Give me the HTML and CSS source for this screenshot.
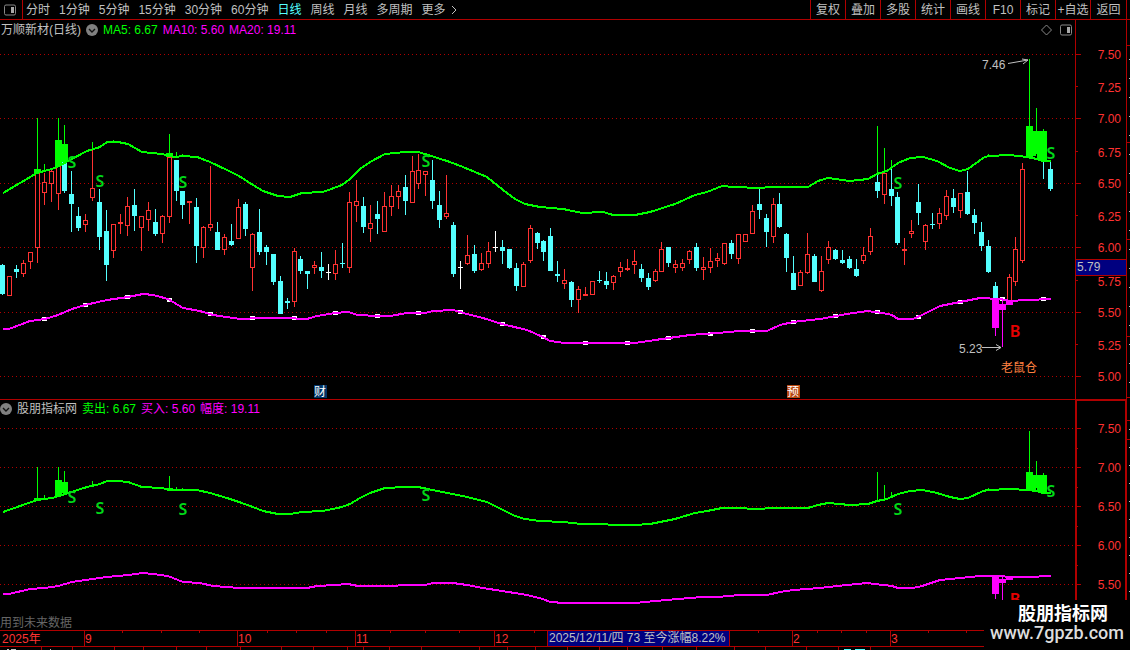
FILE: index.html
```html
<!DOCTYPE html>
<html lang="zh-CN">
<head>
    <meta charset="UTF-8">
    <meta name="viewport" content="width=device-width, initial-scale=1.0">
    <title>万顺新材(日线)</title>
    <link rel="stylesheet" href="styles.css">
</head>
<body>

    <nav class="toolbar">
        <button class="icon-btn" aria-label="侧栏">
            <svg width="12" height="12" viewBox="0 0 12 12"><rect x="0.5" y="1" width="11" height="10" rx="1.5" fill="none" stroke="#888"/><rect x="7" y="3" width="3" height="6" fill="#aaa"/></svg>
        </button>
        <div class="periods">
            <button>分时</button>
            <button>1分钟</button>
            <button>5分钟</button>
            <button>15分钟</button>
            <button>30分钟</button>
            <button>60分钟</button>
            <button class="active">日线</button>
            <button>周线</button>
            <button>月线</button>
            <button>多周期</button>
            <button class="more">更多
                <svg width="6" height="10" viewBox="0 0 6 10"><path d="M1 1l4 4-4 4" fill="none" stroke="#c0c0c0"/></svg>
            </button>
        </div>
        <div class="tools">
            <button>复权</button>
            <button>叠加</button>
            <button>多股</button>
            <button>统计</button>
            <button>画线</button>
            <button>F10</button>
            <button>标记</button>
            <button>+自选</button>
            <button>返回</button>
        </div>
    </nav>

    <section class="panel">
        <header class="info">
            <div class="legend">
                <span class="name">万顺新材(日线)</span>
                <svg class="drop" width="12" height="12" viewBox="0 0 12 12"><circle cx="6" cy="6" r="6" fill="#808080"/><path d="M3 5l3 3 3-3" fill="none" stroke="#111" stroke-width="1.4"/></svg>
                <span class="green">MA5: 6.67</span>
                <span class="magenta">MA10: 5.60</span>
                <span class="magenta">MA20: 19.11</span>
            </div>
            <div class="marks">
                <svg width="11" height="12" viewBox="0 0 11 12"><path d="M5.500 1l5 5-5 5-5-5z" fill="none" stroke="#888"/></svg>
                <svg width="12" height="12" viewBox="0 0 12 12"><rect x="0.5" y="1" width="11" height="10" rx="1.5" fill="none" stroke="#888"/><rect x="7" y="3" width="3" height="6" fill="#aaa"/></svg>
            </div>
            <div class="axis-top"></div>
        </header>
        <svg id="mainChart" class="chart" viewBox="0 40 1130 360"></svg>
    </section>

    <section class="panel sub">
        <header class="info">
            <div class="legend">
                <svg class="drop" width="12" height="12" viewBox="0 0 12 12"><circle cx="6" cy="6" r="6" fill="#808080"/><path d="M3 5l3 3 3-3" fill="none" stroke="#111" stroke-width="1.4"/></svg>
                <span class="name">股朋指标网</span>
                <span class="green">卖出: 6.67</span>
                <span class="magenta">买入: 5.60</span>
                <span class="magenta">幅度: 19.11</span>
            </div>
            <div class="axis-top"></div>
        </header>
        <svg id="subChart" class="chart" viewBox="0 417 1130 233"></svg>
        <div class="brand">
            <strong>股朋指标网</strong>
            <span>www.7gpzb.com</span>
        </div>
    </section>

    <script src="chart.js"></script>
</body>
</html>
```

FILE: styles.css
```css
* {
    box-sizing: border-box;
}
body {
    margin: 0;
    background: #000;
    color: #c0c0c0;
    font: 12px/18px "Liberation Sans", "Noto Sans CJK SC", sans-serif;
    overflow: hidden;
}
button {
    padding: 0;
    border: 0;
    background: none;
    color: inherit;
    font: inherit;
    white-space: nowrap;
    cursor: pointer;
}

/* top bar */
.toolbar {
    display: flex;
    height: 20px;
    padding-right: 3px;
    border-bottom: 1px solid #b00000;
}
.icon-btn {
    display: flex;
    align-items: center;
    width: 23px;
    padding-left: 4px;
    border-right: 1px solid #b00000;
}
.periods {
    display: flex;
    gap: 9px;
    padding-left: 3px;
}
.periods .active {
    color: #54ffff;
}
.periods .more {
    display: flex;
    align-items: center;
    gap: 5px;
}
.tools {
    display: flex;
    margin-left: auto;
    border-right: 1px solid #b00000;
}
.tools button {
    width: 35px;
    border-left: 1px solid #b00000;
}
.tools button:last-child {
    width: 36px;
}

/* chart panels */
.panel {
    position: relative;
}
.info {
    display: flex;
    height: 20px;
    padding-right: 3px;
}
.legend {
    display: flex;
    align-items: center;
    gap: 5px;
    padding-left: 1px;
    white-space: nowrap;
}
.marks {
    display: flex;
    align-items: center;
    gap: 8px;
    margin-left: auto;
    padding-right: 3px;
}
.axis-top {
    width: 52px;
    border: solid #b00000;
    border-width: 0 1px;
}
.sub .info {
    height: 17px;
}
.sub .legend {
    padding-left: 0;
}
.sub .axis-top {
    margin-left: auto;
    border-width: 1px 2px 0;
}
.green {
    color: #00ff00;
}
.magenta {
    color: #ff00ff;
}
.chart {
    display: block;
    width: 100%;
    height: auto;
}

/* drawing */
.chart rect,
.chart line,
.chart polyline {
    shape-rendering: crispEdges;
}
.grid {
    stroke: #b00000;
    stroke-dasharray: 1 3;
}
.frame {
    fill: #b00000;
}
.axis {
    fill: #ff3232;
    text-anchor: end;
}
.date {
    fill: #ff3232;
}
.band {
    fill: none;
    stroke-width: 2;
}
.plain {
    fill: #c0c0c0;
}
.muted {
    fill: #666;
}
.sell,
.buy {
    font: 600 16px "Noto Sans", sans-serif;
    text-anchor: middle;
    fill: #00d818;
}
.buy {
    fill: #e60000;
}
.note {
    fill: #ff8040;
}
.badge {
    fill: #fff;
    text-anchor: middle;
}
.arrow {
    fill: none;
    stroke: #c0c0c0;
}

/* site name in the corner */
.brand {
    position: absolute;
    right: 0;
    bottom: 0;
    display: flex;
    flex-direction: column;
    align-items: center;
    width: 146px;
    height: 50px;
    padding-top: 4px;
    background: #000;
    color: #fff;
}
.brand strong {
    padding-left: 12px;
    font-size: 18px;
    line-height: 20px;
}
.brand span {
    color: #ddd;
    font: 500 18px/18px Roboto, sans-serif;
}
```

FILE: chart.js
```javascript
// x, type (u up, d down, w doji), high, top, bottom, low
const candles = `2 d 264 265 294 295;9 u 276 276 296 296;16 d 265 269 272 278;23 u 260 263 274 277;30 u 252 252 262 269
37 u 172 172 248 263;44 u 173 182 193 205;51 u 169 171 184 202;58 u 165 165 194 210;64 d 162 162 191 193
71 d 171 194 204 232;78 d 207 216 228 231;85 u 214 220 225 232;92 u 150 188 198 201;99 d 189 202 237 250
106 d 210 231 265 281;113 u 224 224 251 258;120 u 214 222 224 234;127 u 197 206 226 236;134 d 189 205 216 231
141 u 216 216 228 251;148 u 202 210 220 231;155 d 209 222 234 236;162 u 215 216 234 243;169 u 157 157 217 223
176 d 160 160 191 201;182 d 191 191 205 219;189 u 201 201 203 224;196 d 198 207 246 263;203 u 226 227 248 258
210 u 166 224 228 231;217 d 222 232 250 250;224 u 234 237 250 255;231 d 224 241 245 246;238 u 199 207 239 239
245 d 202 204 229 236;252 u 233 234 268 291;259 d 209 232 252 255;266 d 245 247 252 265;273 d 254 254 282 285
280 d 276 281 314 314;287 d 298 301 303 309;294 u 248 251 302 307;300 d 256 259 271 274;307 d 271 271 274 289
314 u 261 265 268 274;321 d 252 267 271 278;328 w 264 272 273 280;335 u 250 264 274 280;342 d 243 263 264 268
349 u 192 202 268 273;356 u 180 201 206 222;363 d 197 206 227 233;370 u 205 223 229 242;377 d 201 214 219 234
384 u 192 206 232 232;391 u 185 196 207 216;398 u 185 191 197 209;405 d 175 187 201 215;412 u 156 171 203 203
418 u 154 170 184 189;425 u 171 171 175 196;432 d 160 180 201 209;439 d 191 205 220 228;446 u 175 213 217 219
453 d 222 225 274 277;460 w 261 267 268 289;467 u 235 255 264 265;474 d 245 254 271 273;481 u 253 263 270 271
488 u 242 251 264 268;495 w 231 247 248 252;502 d 240 247 251 264;509 d 249 249 268 269;516 d 263 268 286 291
523 u 262 264 287 287;530 u 225 228 261 263;537 d 232 233 243 249;543 d 240 241 252 261;550 d 228 236 271 271
557 d 261 274 276 282;564 u 269 280 284 289;571 d 281 282 300 307;578 u 286 289 300 313;585 u 287 294 296 296
592 u 281 281 295 295;599 d 271 280 281 283;606 d 272 281 285 289;613 u 275 276 283 290;620 u 262 267 272 277
627 u 259 268 270 271;634 u 250 261 265 274;641 d 264 269 278 282;648 d 273 278 287 290;655 u 269 271 281 282
661 u 242 249 272 272;668 d 247 247 263 267;675 u 260 264 268 273;682 u 259 263 268 271;689 u 250 251 260 264
696 d 243 247 268 271;703 u 257 267 270 280;710 u 248 261 268 273;717 u 253 258 261 267;724 u 243 243 264 265
731 d 240 243 254 259;738 u 234 234 259 264;745 u 234 234 242 242;752 u 205 211 234 234;759 d 188 204 210 219
766 d 214 218 232 247;773 u 198 204 237 243;779 d 193 204 227 228;786 d 233 234 258 272;793 d 256 273 290 290
800 u 270 272 286 286;807 u 233 254 273 274;814 d 254 256 282 282;821 u 256 271 291 292;828 u 241 247 260 264
835 d 249 250 259 260;842 d 250 260 263 264;849 d 256 259 268 269;856 d 259 269 276 277;863 u 247 255 261 264
870 u 228 236 252 255;877 d 174 182 191 198;884 u 173 173 195 204;891 d 165 189 196 206;897 d 192 197 243 245
904 u 238 249 251 265;911 u 220 231 234 238;918 d 184 202 213 225;925 u 224 225 242 250;932 d 213 224 225 229
939 u 208 213 224 229;946 u 190 196 216 220;953 d 189 198 207 213;960 u 193 193 211 218;967 d 171 192 214 215
974 d 209 215 223 234;981 d 222 232 246 251;988 d 240 246 272 273;995 d 282 286 298 298;1009 u 274 277 301 301
1015 u 237 249 282 286;1022 u 163 169 261 263;1043 d 160 160 162 179;1050 d 161 169 189 191`
    .split(/[;\n]/).map(row => row.split(' '));

const upper = '3,193 20,183 37,173 52,169 59,166 68,161 87,151 100,147 107,142 118,142 128,144 142,152 162,154 169,156 175,157 183,156 197,157 210,162 227,170 239,176 253,185 263,191 278,196 290,197 302,193 323,192 342,185 350,179 360,169 370,162 385,154 405,152 418,152 428,155 447,161 463,167 487,177 503,190 515,199 525,204 540,207 563,209 582,213 603,212 613,215 635,215 650,212 675,204 695,195 707,192 722,186 733,187 760,188 770,187 808,187 818,181 828,178 850,181 868,179 877,174 887,171 898,163 910,158 923,157 937,161 950,168 960,171 968,169 983,158 988,156 1010,155 1027,157 1037,159 1043,161 1051,161';
const lower = '3,329 9,329 30,321 45,319 58,315 72,309 85,305 107,300 128,297 143,294 153,295 168,299 183,308 200,311 213,315 240,319 260,318 285,318 307,319 317,316 335,313 348,312 358,315 377,316 390,316 407,313 425,313 433,311 453,310 467,314 483,318 502,324 527,330 543,337 550,341 565,343 635,343 655,340 690,335 703,334 717,333 740,331 767,331 780,325 793,322 820,319 847,314 867,311 883,313 892,315 898,319 913,319 922,315 940,306 960,302 980,298 1000,299 1010,301 1027,300 1051,299';

// parts outside the bands: x, y, width, height
const over = [
    [37, 118, 1, 52], [34, 169, 7, 4], [44, 164, 1, 8], [58, 118, 1, 24], [55, 140, 7, 26], [64, 125, 1, 20],
    [61, 144, 7, 18], [92, 142, 1, 8], [113, 140, 1, 2], [169, 134, 1, 20], [166, 153, 7, 4], [176, 152, 1, 5], [182, 154, 1, 3],
    [828, 177, 1, 2], [877, 126, 1, 48], [884, 148, 1, 25], [891, 160, 1, 8], [988, 154, 1, 2],
    [1029, 59, 1, 70], [1026, 126, 7, 31], [1036, 108, 1, 25], [1033, 131, 7, 23],
    [1043, 129, 1, 4], [1040, 131, 7, 30], [1033, 153, 3, 3], [1037, 153, 3, 6]
];
const under = [[995, 298, 1, 38], [992, 298, 7, 30], [1002, 300, 1, 47], [999, 304, 7, 6], [1006, 301, 7, 4], [148, 293, 1, 2]];
const marks = [44, 85, 127, 169, 210, 252, 294, 335, 377, 418, 460, 502, 543, 585, 627, 668, 710, 752, 793, 835, 877, 918, 960, 1002, 1043];

const RED = '#ff3232', CYAN = '#54ffff';
const rect = (x, y, w, h, fill) => `<rect x="${x}" y="${y}" width="${w}" height="${h}" fill="${fill}"/>`;
const frame = (x, y, w, h) => `<rect class="frame" x="${x}" y="${y}" width="${w}" height="${h}"/>`;
const text = (x, y, str, cls) => `<text x="${x}" y="${y}" class="${cls}">${str}</text>`;
const grid = y => `<line class="grid" x1="0" x2="1075" y1="${y + 0.5}" y2="${y + 0.5}"/>`;

// the lower panel shows 78px per yuan, the upper one 129px
const toSub = y => Math.round(428 + (y - 54) * 78 / 129);

function bandY(points, x) {
    const p = points.split(' ').map(s => s.split(',').map(Number));
    const i = p.findIndex(q => q[0] >= x);
    if (i < 1) return p[0][1];
    const [x0, y0] = p[i - 1], [x1, y1] = p[i];
    return y0 + (y1 - y0) * (x - x0) / (x1 - x0);
}

function band(points, color) {
    return `<polyline class="band" points="${points}" stroke="${color}"/>`;
}

function candle([x, type, high, top, bottom, low]) {
    [x, high, top, bottom, low] = [x, high, top, bottom, low].map(Number);
    const color = { u: RED, d: CYAN, w: '#fff' }[type];
    let out = rect(x, high, 1, low - high, color);
    if (type === 'u' && bottom - top > 2) {
        out += rect(x - 2, top, 5, bottom - top, color) + rect(x - 1, top + 1, 3, bottom - top - 2, '#000');
    } else {
        out += rect(x - 2, top, 5, bottom - top, color);
    }
    return out;
}

function drawMain() {
    let out = '';
    [54, 118, 183, 247, 312, 376].forEach((y, i) => {
        out += grid(y) + frame(1076, y, 5, 1) + text(1121, y + 5, (7.5 - i * 0.5).toFixed(2), 'axis');
    });
    [86, 151, 215, 280, 344].forEach((y, i) => {
        out += frame(1076, y, 2, 1) + text(1121, y + 6, (7.25 - i * 0.5).toFixed(2), 'axis');
    });
    out += frame(1075, 40, 1, 360) + frame(1126, 40, 1, 360) + frame(0, 399, 1127, 1);
    out += frame(1075, 259, 52, 17) + rect(1076, 260, 50, 15, '#000080') + text(1077, 271, '5.79', 'plain');

    out += candles.map(candle).join('');
    out += marks.map(x => rect(x - 2, Math.round(bandY(lower, x)) - 2, 5, 4, '#fff')).join('');
    out += band(lower, '#ff00ff') + band(upper, '#00ff00');
    out += over.map(r => rect(...r, '#00ff00')).join('');
    out += under.map(r => rect(...r, '#ff00ff')).join('');

    [[72, 168], [100, 187], [183, 188], [426, 167], [898, 189], [1051, 159]].forEach(p => out += text(...p, 'S', 'sell'));
    out += text(1015, 337, 'B', 'buy');
    out += text(982, 69, '7.46', 'plain') + '<path class="arrow" d="M1008 63.5l20-3.500m-6-1l6 1-5 4"/>';
    out += text(959, 353, '5.23', 'plain') + '<path class="arrow" d="M982 347.500h19m-5-3l5 3-5 3"/>';
    out += text(1001, 372, '老鼠仓', 'note');
    out += rect(314, 385, 13, 13, '#003468') + text(320, 396, '财', 'badge');
    out += rect(787, 385, 13, 13, '#b84810') + text(793, 396, '预', 'badge');

    // edge of the neighbouring pane
    [45, 142, 239, 336, 397].forEach(y => out += frame(1127, y, 3, 1));
    for (let y = 59; y < 399; y += 19) out += rect(1129, y, 1, 1, '#c0c0c0');
    document.getElementById('mainChart').innerHTML = out;
}

function drawSub() {
    let out = '';
    [428, 467, 506, 545, 584].forEach((y, i) => {
        out += grid(y) + frame(1077, y, 4, 1) + text(1121, y + 5, (7.5 - i * 0.5).toFixed(2), 'axis');
        if (i < 4) out += frame(1077, y + 20, 1, 1);
    });
    out += frame(1075, 417, 2, 213) + frame(1125, 417, 2, 213);
    const scale = s => s.replace(/,(\d+)/g, (m, y) => ',' + toSub(+y));
    const scaleRect = ([x, y, w, h]) => [x, toSub(y), w, Math.max(2, toSub(y + h) - toSub(y))];
    out += band(scale(lower), '#ff00ff') + band(scale(upper), '#00ff00');
    out += over.map(r => rect(...scaleRect(r), '#00ff00')).join('');
    out += under.map(r => rect(...scaleRect(r), '#ff00ff')).join('');
    [[72, 503], [100, 514], [183, 515], [426, 501], [898, 515], [1051, 497]].forEach(p => out += text(...p, 'S', 'sell'));
    out += text(1015, 605, 'B', 'buy');
    out += text(0, 627, '用到未来数据', 'muted');

    // time line
    out += frame(0, 630, 1130, 1) + frame(0, 646, 1130, 1);
    [122, 161, 199, 267, 296, 326, 390, 425, 459, 534, 758, 817, 841, 866, 928, 966].forEach(x => out += frame(x, 631, 1, 2));
    [41, 72, 114, 143, 176, 206, 240, 281, 313, 347, 363, 389, 421, 479, 507, 535, 567, 599, 627, 662, 696, 734, 765, 806, 838, 870].forEach(x => out += frame(x, 647, 1, 3));
    [[84, '9'], [237, '10'], [355, '11'], [494, '12'], [792, '2'], [890, '3']].forEach(([x, label]) => {
        out += frame(x, 631, 1, 15) + text(x + 1, 643, label, 'date');
    });
    out += text(2, 643, '2025年', 'date');
    out += frame(547, 631, 183, 15) + rect(548, 631, 181, 15, '#000080');
    out += text(549, 642, '2025/12/11/四 73 至今涨幅8.22%', 'plain');
    out += rect(7, 649, 2, 1, '#c0c0c0') + rect(11, 649, 5, 1, '#c0c0c0') + rect(50, 649, 1, 1, '#c0c0c0');
    out += rect(844, 649, 7, 1, CYAN) + rect(855, 649, 10, 1, CYAN);

    [420, 439].forEach(y => out += frame(1127, y, 3, 1));
    for (let y = 429; y < 599; y += 18) out += rect(1129, y, 1, 1, '#c0c0c0');
    document.getElementById('subChart').innerHTML = out;
}

drawMain();
drawSub();
```
